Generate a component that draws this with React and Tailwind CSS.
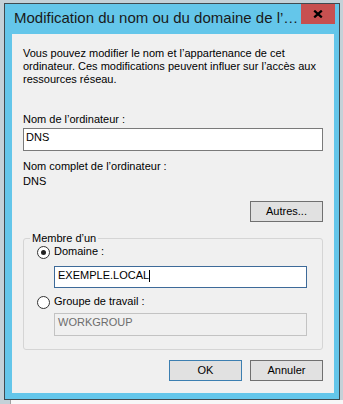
import React from "react";

function Radio({ checked }) {
  return (
    <span className="mt-[1px] flex h-[13px] w-[13px] shrink-0 items-center justify-center rounded-full border border-[#333333] bg-white">
      {checked && <span className="h-[5px] w-[5px] rounded-full bg-[#222222]" />}
    </span>
  );
}

function Button({ children, primary }) {
  return (
    <button
      className={
        primary
          ? "flex h-[21px] w-[73px] items-center justify-center border border-[#3c7fb1] bg-[#e1e1e1] text-[11px] leading-[13px] text-black"
          : "flex h-[21px] w-[73px] items-center justify-center border border-[#707070] bg-[#e1e1e1] text-[11px] leading-[13px] text-black"
      }
    >
      {children}
    </button>
  );
}

export default function App() {
  return (
    <div className="h-[404px] w-[343px] overflow-hidden bg-[#c4d1d8] font-['Liberation_Sans',Arial,sans-serif] text-black">

      {/* window */}
      <div className="ml-[4px] mt-[3px] flex h-[397px] w-[336px] flex-col border border-[#3f4a50] bg-[#64c6ea]">

        {/* title bar */}
        <div className="flex h-[30px] items-start">
          <div className="ml-[9px] mt-[4px] min-w-0 flex-1 overflow-hidden whitespace-nowrap text-[15px] leading-[20px] text-[#1a1a1a]">
            Modification du nom ou du domaine de l’…
          </div>
          <button className="mr-[4px] flex h-[20px] w-[34px] shrink-0 items-center justify-center bg-[#c75050]">
            <svg width="10" height="8" viewBox="0 0 10 8">
              <path d="M1.2 0.6 L8.8 7.4 M8.8 0.6 L1.2 7.4" stroke="#000" strokeWidth="2.2" />
            </svg>
          </button>
        </div>

        {/* content */}
        <div className="ml-[7px] flex h-[359px] w-[322px] flex-col bg-[#f0f0f0] px-[11px] text-[11px] leading-[13px]">

          <p className="mt-[13px] whitespace-nowrap">
            Vous pouvez modifier le nom et l’appartenance de cet
            <br />
            ordinateur. Ces modifications peuvent influer sur l’accès aux
            <br />
            ressources réseau.
          </p>

          <div className="mt-[27px]">Nom de l’ordinateur :</div>
          <div className="mt-[2px] h-[23px] border border-[#7a7a7a] bg-white pl-[2px] pt-[2px]">DNS</div>

          <div className="mt-[9px]">Nom complet de l’ordinateur :</div>
          <div className="mt-[2px]">DNS</div>

          <div className="mt-[13px] flex justify-end">
            <Button>Autres...</Button>
          </div>

          <fieldset className="mt-[10px] rounded-[3px] border border-[#d5d5d5] pb-[13px]">
            <legend className="ml-[6px] px-[2px] leading-[13px]">Membre d’un</legend>

            <div className="ml-[13px] flex items-start">
              <Radio checked />
              <span className="ml-[4px]">Domaine :</span>
            </div>
            <div className="ml-[30px] mt-[7px] flex h-[22px] w-[253px] items-start border border-[#3d6a99] bg-white pl-[3px] pt-[2px]">
              <span>EXEMPLE.LOCAL</span>
              <span className="mt-[1px] inline-block h-[12px] w-px bg-black" />
            </div>

            <div className="ml-[13px] mt-[7px] flex items-start">
              <Radio />
              <span className="ml-[4px]">Groupe de travail :</span>
            </div>
            <div className="ml-[30px] mt-[4px] h-[23px] w-[253px] border border-[#c3c3c3] bg-[#f0f0f0] pl-[3px] pt-[2px] text-[#6d6d6d]">
              WORKGROUP
            </div>
          </fieldset>

          <div className="mt-[10px] flex justify-end gap-[8px]">
            <Button primary>OK</Button>
            <Button>Annuler</Button>
          </div>
        </div>
      </div>

      {/* window behind */}
      <div className="ml-[10px] h-[5px] border-l border-[#a0a0a0] bg-[#f7f7f7]" />
    </div>
  );
}
